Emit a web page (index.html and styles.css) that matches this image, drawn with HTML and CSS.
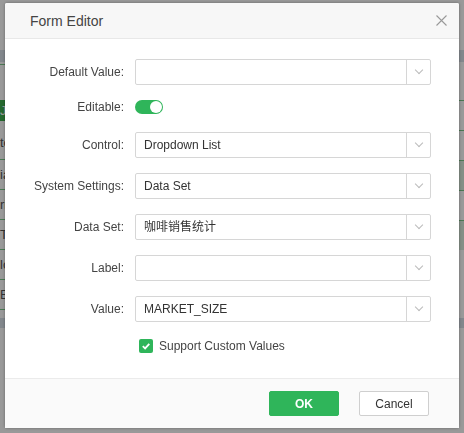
FILE: index.html
```html
<!DOCTYPE html>
<html>
<head>
<meta charset="utf-8">
<title>Form Editor</title>
<link rel="stylesheet" href="styles.css">
</head>
<body>

<div class="page">
	<div class="page-head"></div>
	<div class="page-tabs"></div>
	<div class="page-body">
		<ul class="side">
			<li class="gap"></li>
			<li class="on">Ju</li>
			<li class="tall">to</li>
			<li>ia</li>
			<li>ri</li>
			<li>Te</li>
			<li>lo</li>
			<li>Es</li>
		</ul>
		<div class="main">
			<div class="m-row first"></div>
			<div class="m-row"></div>
			<div class="m-row fill"></div>
			<div class="m-row"></div>
			<div class="m-row fill"></div>
		</div>
	</div>
	<div class="page-foot"></div>
</div>

<div class="mask"></div>

<div class="dialog">
	<div class="dialog-head">
		<span class="dialog-title">Form Editor</span>
		<span class="dialog-close">
			<svg width="11" height="11" viewBox="0 0 11 11"><path d="M0.5 0.5L10.5 10.5M10.5 0.5L0.5 10.5" stroke="#999" stroke-width="1.1" fill="none"/></svg>
		</span>
	</div>

	<div class="dialog-body">
		<div class="row">
			<label class="lbl">Default Value:</label>
			<div class="select"><span class="val"></span><span class="arrow"></span></div>
		</div>
		<div class="row row-switch">
			<label class="lbl">Editable:</label>
			<span class="switch"><i></i></span>
		</div>
		<div class="row">
			<label class="lbl">Control:</label>
			<div class="select"><span class="val">Dropdown List</span><span class="arrow"></span></div>
		</div>
		<div class="row">
			<label class="lbl">System Settings:</label>
			<div class="select"><span class="val">Data Set</span><span class="arrow"></span></div>
		</div>
		<div class="row">
			<label class="lbl">Data Set:</label>
			<div class="select"><span class="val">咖啡销售统计</span><span class="arrow"></span></div>
		</div>
		<div class="row">
			<label class="lbl">Label:</label>
			<div class="select"><span class="val"></span><span class="arrow"></span></div>
		</div>
		<div class="row">
			<label class="lbl">Value:</label>
			<div class="select"><span class="val">MARKET_SIZE</span><span class="arrow"></span></div>
		</div>
		<div class="row row-check">
			<span class="check">
				<svg width="10" height="10" viewBox="0 0 10 10"><path d="M1.8 5.2L4.1 7.4L8.3 2.8" stroke="#fff" stroke-width="1.8" fill="none"/></svg>
			</span>
			<span class="check-text">Support Custom Values</span>
		</div>
	</div>

	<div class="dialog-foot">
		<button class="btn btn-ok">OK</button>
		<button class="btn btn-cancel">Cancel</button>
	</div>
</div>

</body>
</html>
```

FILE: styles.css
```css
*{
	box-sizing:border-box;
}
html,body{
	margin:0;
	padding:0;
}
body{
	width:464px;
	height:433px;
	overflow:hidden;
	background:#fff;
	font-family:"Liberation Sans", Arial, "Noto Sans CJK SC", sans-serif;
	font-size:12px;
	color:#333;
}

/* page behind the dialog */
.page{
	height:433px;
}
.page-head{
	height:50px;
}
.page-tabs{
	height:12px;
	background:#d9e1ea;
}
.page-body{
	display:flex;
}
.side{
	list-style:none;
	margin:2px 0 0;
	padding:0;
	width:232px;
	border-top:1px solid #7cc98a;
}
.side li{
	height:30px;
	line-height:30px;
	border-bottom:1px solid #7cc98a;
	font-size:13px;
	color:#555;
	padding-left:0;
}
.side li.gap{
	height:35px;
	border-bottom:0;
}
.side li.on{
	height:21px;
	line-height:21px;
	background:#3fae4f;
	color:#fff;
	border-bottom:0;
}
.side li.tall{
	height:39px;
	line-height:44px;
}
.main{
	flex:1;
	margin-top:38px;
}
.m-row{
	height:30px;
	border-top:1px solid #7cc98a;
}
.m-row.fill{
	background:#dcefe0;
}
.page-foot{
	height:10px;
	margin-top:8px;
	background:#d9e1ea;
}

.mask{
	position:fixed;
	left:0;
	top:0;
	right:0;
	bottom:0;
	background:rgba(0,0,0,0.4);
}

/* dialog */
.dialog{
	position:absolute;
	left:5px;
	top:3px;
	width:454px;
	height:425px;
	background:#fff;
	border-radius:2px;
	box-shadow:0 0 3px rgba(0,0,0,0.35);
	display:flex;
	flex-direction:column;
}
.dialog-head{
	height:36px;
	background:#f7f7f7;
	border-bottom:1px solid #e8e8e8;
	border-radius:2px 2px 0 0;
	display:flex;
	align-items:center;
	justify-content:space-between;
	padding:0 12px 0 25px;
}
.dialog-title{
	font-size:14px;
	color:#444;
}
.dialog-close{
	display:flex;
}
.dialog-body{
	flex:1;
	padding:20px 28px 0 0;
}
.row{
	display:flex;
	align-items:center;
	height:26px;
	margin-bottom:15px;
}
.lbl{
	width:119px;
	text-align:right;
	margin-right:11px;
	color:#444;
}
.row-switch{
	height:14px;
	margin-bottom:18px;
}
.switch{
	position:relative;
	width:28px;
	height:14px;
	border-radius:7px;
	background:#2fb55a;
}
.switch i{
	position:absolute;
	right:1px;
	top:1px;
	width:12px;
	height:12px;
	border-radius:50%;
	background:#fff;
}
.select{
	flex:1;
	height:26px;
	display:flex;
	border:1px solid #d6d6d6;
	border-radius:2px;
	background:#fff;
}
.select .val{
	flex:1;
	padding-left:8px;
	line-height:24px;
	color:#333;
}
.select .arrow{
	position:relative;
	width:24px;
	border-left:1px solid #d6d6d6;
}
.select .arrow:after{
	content:"";
	position:absolute;
	left:9px;
	top:7px;
	width:5px;
	height:5px;
	border-right:1px solid #bbb;
	border-bottom:1px solid #bbb;
	transform:rotate(45deg);
}
.row-check{
	height:15px;
	margin-top:16px;
	padding-left:134px;
}
.check{
	width:14px;
	height:14px;
	border-radius:2px;
	background:#2fb55a;
	display:flex;
	align-items:center;
	justify-content:center;
	margin-right:6px;
}
.check-text{
	color:#444;
}
.dialog-foot{
	height:50px;
	background:#fafafa;
	border-top:1px solid #ebebeb;
	display:flex;
	justify-content:flex-end;
	align-items:flex-start;
	gap:20px;
	padding:12px 30px 0 0;
}
.btn{
	width:70px;
	height:25px;
	border-radius:2px;
	font-family:"Liberation Sans", Arial, sans-serif;
	font-size:12px;
	cursor:pointer;
}
.btn-ok{
	background:#2fb55a;
	border:1px solid #2fb55a;
	color:#fff;
	font-weight:bold;
}
.btn-cancel{
	background:#fff;
	border:1px solid #cfcfcf;
	color:#333;
}
```
